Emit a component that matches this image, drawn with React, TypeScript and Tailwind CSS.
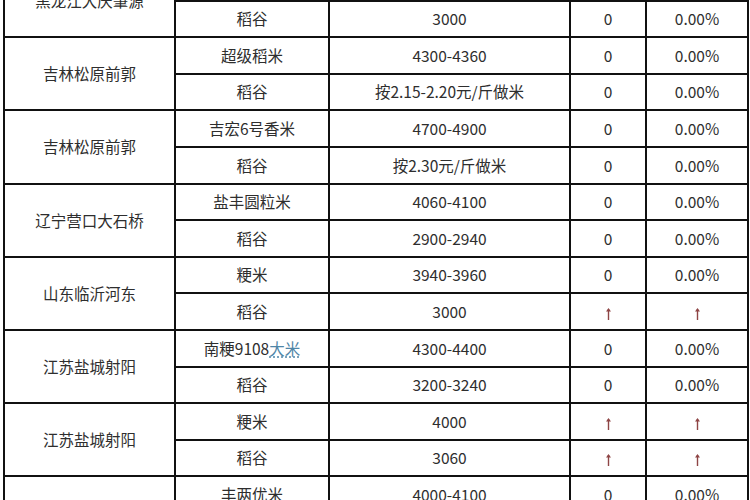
const up = "↑";

type Row = { product: React.ReactNode; price: string; change: string; pct: string };
type Group = { region: string; rows: Row[] };

const groups: Group[] = [
    {
        region: "黑龙江大庆肇源",
        rows: [
            { product: "长粒香米", price: "4600-4700", change: "0", pct: "0.00%" },
            { product: "稻谷", price: "3000", change: "0", pct: "0.00%" },
        ],
    },
    {
        region: "吉林松原前郭",
        rows: [
            { product: "超级稻米", price: "4300-4360", change: "0", pct: "0.00%" },
            { product: "稻谷", price: "按2.15-2.20元/斤做米", change: "0", pct: "0.00%" },
        ],
    },
    {
        region: "吉林松原前郭",
        rows: [
            { product: "吉宏6号香米", price: "4700-4900", change: "0", pct: "0.00%" },
            { product: "稻谷", price: "按2.30元/斤做米", change: "0", pct: "0.00%" },
        ],
    },
    {
        region: "辽宁营口大石桥",
        rows: [
            { product: "盐丰圆粒米", price: "4060-4100", change: "0", pct: "0.00%" },
            { product: "稻谷", price: "2900-2940", change: "0", pct: "0.00%" },
        ],
    },
    {
        region: "山东临沂河东",
        rows: [
            { product: "粳米", price: "3940-3960", change: "0", pct: "0.00%" },
            { product: "稻谷", price: "3000", change: up, pct: up },
        ],
    },
    {
        region: "江苏盐城射阳",
        rows: [
            {
                product: (
                    <>
                        南粳9108
                        <span className="text-[#4f86a8] underline decoration-dotted underline-offset-2">大米</span>
                    </>
                ),
                price: "4300-4400",
                change: "0",
                pct: "0.00%",
            },
            { product: "稻谷", price: "3200-3240", change: "0", pct: "0.00%" },
        ],
    },
    {
        region: "江苏盐城射阳",
        rows: [
            { product: "粳米", price: "4000", change: up, pct: up },
            { product: "稻谷", price: "3060", change: up, pct: up },
        ],
    },
    {
        region: "江苏淮安楚州",
        rows: [
            { product: "丰两优米", price: "4000-4100", change: "0", pct: "0.00%" },
            { product: "稻谷", price: "2800-2900", change: "0", pct: "0.00%" },
        ],
    },
];

// thin red-brown up arrow, drawn so it doesn't depend on a font
function UpArrow() {
    return (
        <svg width="7" height="14" viewBox="0 0 7 14" className="inline-block align-middle" aria-label="↑">
            <path d="M3.5 13V2" stroke="#8e4545" strokeWidth="1.4" />
            <path d="M1 4.5L3.5 1L6 4.5Z" fill="#8e4545" />
        </svg>
    );
}

function Mark({ value }: { value: string }) {
    if (value === up) return <UpArrow />;
    return <>{value}</>;
}

export default function App() {
    const cell = "border-2 border-[#111] text-center align-middle p-0";

    return (
        <div className="w-[750px] h-[500px] overflow-hidden bg-white">
            <table
                className="ml-[3px] mt-[-37px] w-[744px] border-collapse table-fixed text-[15.5px] text-[#2e2e2e]"
                style={{ fontFamily: '"Noto Sans CJK SC", "Noto Sans", sans-serif' }}
            >
                <colgroup>
                    <col className="w-[171px]" />
                    <col className="w-[154px]" />
                    <col className="w-[241px]" />
                    <col className="w-[76px]" />
                    <col className="w-[102px]" />
                </colgroup>
                <tbody>
                    {groups.map((g, gi) =>
                        g.rows.map((r, ri) => (
                            <tr key={`${gi}-${ri}`} className="h-[36.6px]">
                                {ri === 0 && (
                                    <td rowSpan={g.rows.length} className={cell}>
                                        {g.region}
                                    </td>
                                )}
                                <td className={cell}>{r.product}</td>
                                <td className={cell}>{r.price}</td>
                                <td className={cell}>
                                    <Mark value={r.change} />
                                </td>
                                <td className={cell}>
                                    <Mark value={r.pct} />
                                </td>
                            </tr>
                        ))
                    )}
                </tbody>
            </table>
        </div>
    );
}
